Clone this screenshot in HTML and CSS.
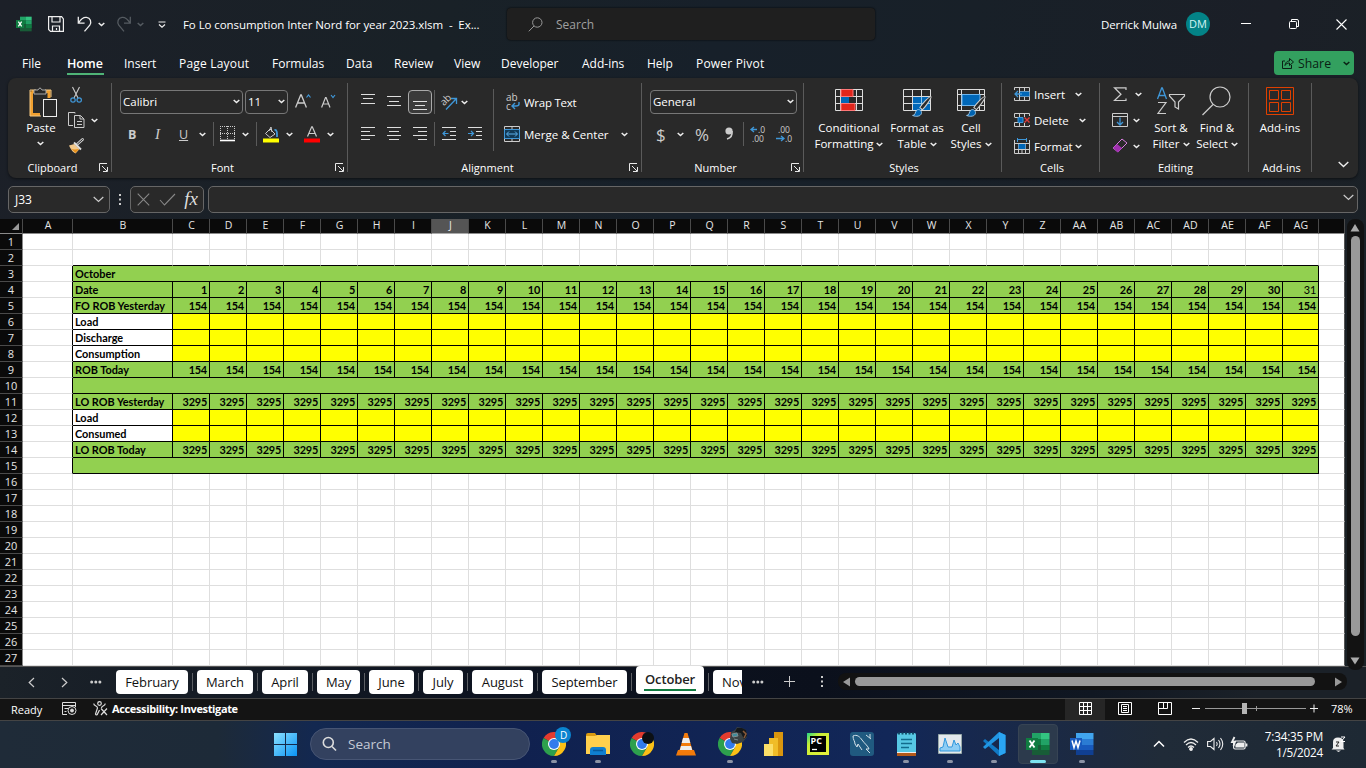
FILE: index.html
```html
<!DOCTYPE html>
<html lang="en">
<head>
<meta charset="utf-8">
<title>Fo Lo consumption Inter Nord for year 2023.xlsm - Excel</title>
<link rel="stylesheet" href="styles.css">
</head>
<body>
<svg class="defs" width="0" height="0">
  <symbol id="chev" viewBox="0 0 7 5"><path d="M.7 1 3.5 3.6 6.3 1" fill="none" stroke="currentColor" stroke-width="1.5"/></symbol>
  <symbol id="launch" viewBox="0 0 9 9"><path d="M.5 8V.5H8M3 3l5 5M8.5 4v4.500H4" fill="none" stroke="#e8e8e8"/></symbol>
  <symbol id="excel" viewBox="0 0 24 24"><path fill="#21a366" d="M6 1h9v6H6z"/><path fill="#33c481" d="M15 1h8.500v6H15z"/><path fill="#107c41" d="M6 7h9v6H6z"/><path fill="#21a366" d="M15 7h8.500v6H15z"/><path fill="#185c37" d="M6 13h17.500v10H6z"/><path fill="#107c41" d="M15 13h8.500v5H15zM0 6h12v12H0z"/><path d="M3.500 8.500 8.500 15.500M8.500 8.500 3.500 15.500" stroke="#fff" stroke-width="1.900"/></symbol>
  <symbol id="chrome" viewBox="0 0 24 24"><path fill="#e33b2e" d="M12 12 1.600 6a12 12 0 0 1 20.800 0z"/><path fill="#2da04d" d="M1.600 6A12 12 0 0 0 12 24l5-9-5-3z"/><path fill="#fbc116" d="M12 6h10.400A12 12 0 0 1 12 24l5.200-9z"/><circle cx="12" cy="12" r="6" fill="#fff"/><circle cx="12" cy="12" r="4.900" fill="#327bec"/></symbol>
  <symbol id="brush" viewBox="0 0 20 20"><path d="M18.500.7c1 .8-5 9.500-8 12.300L8 11C10 7.500 17.300-.2 18.500.7z" fill="#292929" stroke="#d0d0d0"/><path d="M1 18.500c3 0 2-3 4-5 2-1.600 5 .5 4.500 3-.7 3-5 3.500-8.500 2z" fill="#0063b1" stroke="#a9d3f2" stroke-width=".8"/></symbol>
</svg>

<header class="titlebar">
  <svg width="16" height="16"><use href="#excel"/></svg>
  <svg width="16" height="16" fill="none" stroke="#eee" stroke-width="1.200"><path d="M.6.6h13L15.400 3v12.400H2.500L.6 13.500zM4 .6V6h8V.6M4.500 15.400V10h7v5.400M8.500 12v2"/></svg>
  <svg width="16" height="16" fill="none" stroke="#eee" stroke-width="1.300"><path d="M1.300.8v6.400h6.300M1.500 7C4 3 6.500 1 9.500 1.400c4 .6 5.300 4.600 3.300 7.800L7.500 15.400"/></svg>
  <svg class="chev"><use href="#chev"/></svg>
  <svg width="16" height="16" fill="none" stroke="#555b61" stroke-width="1.300"><path d="M14.300.8v6.400H8M14 7C11.500 3 9 1 6 1.400 2 2 .8 6 2.800 9.200L8 15.400"/></svg>
  <svg class="chev dim"><use href="#chev"/></svg>
  <svg width="8" height="7" fill="none" stroke="#eee" stroke-width="1.200"><path d="M.5 1h7M1 3.500l3 2.600 3-2.600"/></svg>
  <span class="doc">Fo Lo consumption Inter Nord for year 2023.xlsm&nbsp; -&nbsp; Ex...</span>
  <div class="search"><svg width="15" height="15" fill="none" stroke="#999"><circle cx="9.300" cy="5.500" r="4.700"/><path d="M6 9 .8 14.300"/></svg><span>Search</span></div>
  <span class="user">Derrick Mulwa</span>
  <span class="avatar">DM</span>
  <svg width="10" height="10" stroke="#fff"><path d="M0 4.500h10"/></svg>
  <svg width="10" height="10" fill="none" stroke="#fff"><rect x=".5" y="2.500" width="7" height="7" rx="1"/><path d="M2.500 2.500V.500H8Q9.500.500 9.500 2v5.500h-2"/></svg>
  <svg width="11" height="11" stroke="#fff" stroke-width="1.100"><path d="m.5.5 10 10m0-10-10 10"/></svg>
</header>

<nav class="tabs">
  <span>File</span><b>Home</b><span>Insert</span><span>Page Layout</span><span>Formulas</span><span>Data</span><span>Review</span><span>View</span><span>Developer</span><span>Add-ins</span><span>Help</span><span>Power Pivot</span>
  <button class="share"><svg width="12" height="12" fill="none" stroke="#0a2014"><path d="M3 4H.5v7.500h9V8M3 8.500C3.500 5 5.500 4 7.500 4V1.500l4 3.500-4 3.500V6C5.500 6 4 6.500 3 8.500z"/></svg><span>Share</span><svg class="chev"><use href="#chev"/></svg></button>
</nav>

<section class="ribbon">
  <div class="group g-clip">
    <div class="body">
      <div class="big paste">
        <svg width="30" height="31" fill="none"><path d="M3.500 4.500H21V11M12 27.500H3.500v-23" stroke="#f0a030" stroke-width="3"/><path d="M2 3h6m9 0h6v7M2 3v26h11" stroke="#f5c983"/><path d="M6 7V3h4q2-4 4 0h4v4z" fill="#292929" stroke="#aaa"/><rect x="15.500" y="12.500" width="13" height="17" fill="#292929" stroke="#eee"/></svg>
        <span>Paste</span><svg class="chev"><use href="#chev"/></svg>
      </div>
      <div class="clipcol">
        <svg width="16" height="16" fill="none"><path d="m4.500 0 5.500 11M11.500 0 6 11" stroke="#ccc" stroke-width="1.100"/><circle cx="5" cy="13" r="2.200" stroke="#3f97d8" stroke-width="1.200"/><circle cx="11.200" cy="13" r="2.200" stroke="#3f97d8" stroke-width="1.200"/></svg>
        <div class="row"><svg width="17" height="16" fill="none" stroke="#ccc"><path d="M7 1.500V.500H.500v13H5M6.500 3.500h6l3.500 3.500v8.500H6.500zM12 3.500V7h4M9 9.500h5M9 12.500h5"/></svg><svg class="chev"><use href="#chev"/></svg></div>
        <svg width="16" height="16" fill="none"><path d="m9.500 6 5-4.500" stroke="#ccc" stroke-width="2.800" stroke-linecap="round"/><path d="m9.500 6 5-4.500" stroke="#292929" stroke-linecap="round"/><path d="M1 7.500 6.500 6l5 5-4 4.500q-4-2-6.500-8z" fill="#f3c98b"/><path d="M3 10.500q2 1.500 8 .5l-3.500 4z" fill="#e8921c"/><path d="m6 4.500 7 7" stroke="#ddd" stroke-width="1.800"/></svg>
      </div>
    </div>
    <div class="label"><span>Clipboard</span><svg width="9" height="9"><use href="#launch"/></svg></div>
  </div>

  <div class="group g-font">
    <div class="body stack">
      <div class="row r-font1">
        <div class="combo"><span>Calibri</span><svg class="chev"><use href="#chev"/></svg></div>
        <div class="combo"><span>11</span><svg class="chev"><use href="#chev"/></svg></div>
        <svg width="16" height="16" fill="none"><path d="M.6 14.500 5.700 2h.6l5.100 12.500M2.500 10h7" stroke="#ccc" stroke-width="1.300"/><path d="m11.500 4.500 2-2.500 2 2.500" stroke="#3f97d8" stroke-width="1.200"/></svg>
        <svg width="16" height="16" fill="none"><path d="M.6 14.500 4.500 4.500h.6L9 14.500M2 11h5.600" stroke="#ccc" stroke-width="1.200"/><path d="m10 2 2 2.500L14 2" stroke="#3f97d8" stroke-width="1.200"/></svg>
      </div>
      <div class="row r-font2">
        <b>B</b><i>I</i><u>U</u><svg class="chev"><use href="#chev"/></svg><hr>
        <svg width="16" height="16" stroke="#ccc"><path d="M0 .5h15M0 7.500h15M.5 0v14M7.500 0v14M14.500 0v14" stroke-dasharray="1 1"/><path d="M0 14.500h15" stroke="#fff" stroke-width="1.600"/></svg><svg class="chev"><use href="#chev"/></svg><hr>
        <svg width="16" height="17" fill="none"><path d="m7 3 5 5-5 3.500-4.500-4zM6 5l2-4 1 5" stroke="#ccc"/><path d="M11.500 4c3-.5 2.500 4 2.500 7" stroke="#3f97d8" stroke-width="1.800"/><path d="M0 12.500h16v4H0z" fill="#ff0"/></svg><svg class="chev"><use href="#chev"/></svg>
        <svg width="16" height="17" fill="none"><path d="M3.500 10.500 7.700.8h.6l4.200 9.700M5 7.500h6" stroke="#ccc" stroke-width="1.200"/><path d="M0 12.500h16v4H0z" fill="#f00"/></svg><svg class="chev"><use href="#chev"/></svg>
      </div>
    </div>
    <div class="label"><span>Font</span><svg width="9" height="9"><use href="#launch"/></svg></div>
  </div>

  <div class="group g-align">
    <div class="body">
      <div class="stack aligns">
        <div class="row r-al1">
          <svg width="24" height="24" stroke="#ddd"><path d="M5 4.500h14M7 8.500h10M5 13.500h14"/></svg>
          <svg width="24" height="24" stroke="#ddd"><path d="M5 6.500h14M7 11.500h10M5 15.500h14"/></svg>
          <svg width="24" height="24" stroke="#ddd"><rect x=".5" y=".5" width="23" height="23" rx="3.500" fill="#3a3a3a" stroke="#aaa"/><path d="M5 11.500h14M7 15.500h10M5 19.500h14"/></svg>
          <hr>
          <svg width="17" height="17" fill="none"><g class="ab"><text x="-1" y="9" transform="rotate(-45 5 6)">ab</text></g><path d="m5 15.500 10-10.500M10 4.500h5.500V10" stroke="#3f97d8" stroke-width="1.300"/></svg>
          <svg class="chev"><use href="#chev"/></svg>
        </div>
        <div class="row r-al1">
          <svg width="24" height="24" stroke="#ddd"><path d="M5 5.500h14M5 9.500h9M5 13.500h14M5 17.500h9"/></svg>
          <svg width="24" height="24" stroke="#ddd"><path d="M5 5.500h14M7 9.500h10M5 13.500h14M7 17.500h10"/></svg>
          <svg width="24" height="24" stroke="#ddd"><path d="M5 5.500h14M10 9.500h9M5 13.500h14M10 17.500h9"/></svg>
          <hr>
          <svg class="dedent" width="15" height="16" fill="none" stroke="#ddd"><path d="M0 1.500h14M8 5.500h6M8 9.500h6M0 13.500h14"/><path d="M6.500 7.500H1M3.500 5 1 7.500 3.500 10" stroke="#3f97d8" stroke-width="1.200"/></svg>
          <svg class="indent" width="15" height="16" fill="none" stroke="#ddd"><path d="M0 1.500h14M8 5.500h6M8 9.500h6M0 13.500h14"/><path d="M0 7.500h5.500M3 5l2.500 2.500L3 10" stroke="#3f97d8" stroke-width="1.200"/></svg>
        </div>
      </div>
      <div class="stack wraps">
        <div class="row"><svg width="16" height="17" fill="none"><g class="ab sm"><text x="2" y="7">ab</text><text x="2" y="16">c</text></g><path d="M15 8v2q0 2-3 2H8.500M11 9l-3 3 3 3" stroke="#3f97d8" stroke-width="1.400"/></svg><span class="tight">Wrap Text</span></div>
        <div class="row"><svg width="16" height="16" fill="none" stroke="#ccc"><path d="M.5.5h15v15H.5zM8 0v3m0 10v3"/><path d="M.5 3.500h15v9H.5z" fill="#123a56" stroke="#3f97d8"/><path d="M3 8h10M5 5.500 2.500 8 5 10.500M11 5.500 13.500 8 11 10.500" stroke="#5db2ee"/></svg><span>Merge &amp; Center</span><svg class="chev"><use href="#chev"/></svg></div>
      </div>
    </div>
    <div class="label"><span>Alignment</span><svg width="9" height="9"><use href="#launch"/></svg></div>
  </div>

  <div class="group g-num">
    <div class="body stack">
      <div class="combo general"><span>General</span><svg class="chev"><use href="#chev"/></svg></div>
      <div class="row r-num">
        <span class="sym">$</span><svg class="chev"><use href="#chev"/></svg><span class="sym pct">%</span>
        <svg width="9" height="14"><circle cx="4" cy="4" r="3.600" fill="#ccc"/><path d="M7 4c.5 4-1.500 7-5 8" stroke="#ccc" stroke-width="1.600" fill="none"/></svg><hr>
        <svg class="dec" width="16" height="17"><text x="8" y="7">.0</text><text x="2" y="16">.00</text><path d="M7 3.500H1.500M4 1 1 3.500 4 6" stroke="#3f97d8" stroke-width="1.300" fill="none"/></svg>
        <svg class="dec" width="16" height="17"><text x="2" y="7">.00</text><text x="9" y="16">.0</text><path d="M0 12.500h7M5 10l3 2.500L5 15" stroke="#3f97d8" stroke-width="1.300" fill="none"/></svg>
      </div>
    </div>
    <div class="label"><span>Number</span><svg width="9" height="9"><use href="#launch"/></svg></div>
  </div>

  <div class="group g-styles">
    <div class="body">
      <div class="big"><svg width="30" height="31" fill="none"><path d="M1.500 3.500h27v21h-27zM1 10.500h28M1 17.500h28M6.500 3v22M22.500 3v22" stroke="#ddd"/><path d="M7 3.500h12v7H7zm0 14h14v7H7z" fill="#e1251b" stroke="#f77"/><path d="M7 11h8v6H7z" fill="#0067b8"/></svg><span>Conditional<br>Formatting <svg class="chev"><use href="#chev"/></svg></span></div>
      <div class="big"><svg width="32" height="31" fill="none"><path d="M2.500 3.500h27v21h-27zM2 10.500h28M2 17.500h28M11.500 3v22M20.500 3v22" stroke="#ddd"/><path d="M12 11h17v13H12z" fill="#0067b8"/><path d="M12 17.500h17M20.500 11v13" stroke="#8cc5ee"/><use href="#brush" x="9" y="10" width="24" height="21"/></svg><span>Format as<br>Table <svg class="chev"><use href="#chev"/></svg></span></div>
      <div class="big"><svg width="32" height="31" fill="none"><path d="M2.500 3.500h27v21h-27zM2 8.500h28M2 19.500h28M6.500 3v22M24.500 3v22" stroke="#ddd"/><path d="M7 8.500h18v11H7z" fill="#0067b8" stroke="#6cb5ee"/><use href="#brush" x="9" y="10" width="24" height="21"/></svg><span>Cell<br>Styles <svg class="chev"><use href="#chev"/></svg></span></div>
    </div>
    <div class="label"><span>Styles</span></div>
  </div>

  <div class="group g-cells">
    <div class="body">
      <div class="row"><svg width="16" height="15" fill="none"><path d="M.500 3V.500h15v13H.500V11M5.500 0v14M10.500 0v14M5 4.500h10M5 9.500h10" stroke="#ccc"/><path d="M6 4.500h9.500v5H6z" fill="#0067b8"/><path d="M8 7H1M4 4 1 7l3 3" stroke="#3f97d8" stroke-width="1.300"/></svg><span>Insert</span><svg class="chev"><use href="#chev"/></svg></div>
      <div class="row"><svg width="16" height="15" fill="none"><path d="M.500 4V.500h15V3M5.500 0v4m5-4v4M.500 4.500h5M.500 9.500v4h15V12M.500 9.500h5M5.500 9v5m5-4v4" stroke="#ccc"/><path d="M4 4.500h5v5H4z" fill="#0067b8" stroke="#3f97d8"/><path d="m10.500 4.500 5 5m0-5-5 5" stroke="#e23c3c" stroke-width="1.400"/></svg><span>Delete</span><svg class="chev dl"><use href="#chev"/></svg></div>
      <div class="row"><svg width="16" height="16" fill="none"><path d="M3.500 0v4m9-4v4M3 1.500h10" stroke="#3f97d8"/><path d="M.500 2v13.500h15V2M.500 5.500h15M.500 11.500h15M4.500 5v10M11.500 5v10M8 11v4" stroke="#ccc"/><path d="M4.500 6h7v5h-7z" fill="#0067b8"/></svg><span>Format</span><svg class="chev"><use href="#chev"/></svg></div>
    </div>
    <div class="label"><span>Cells</span></div>
  </div>

  <div class="group g-edit">
    <div class="body">
      <div class="editcol">
        <div class="row"><svg width="16" height="15" fill="none" stroke="#ccc" stroke-width="1.200"><path d="M14 3V.800H2.500L9 7.200 2.500 13.500H14v-2"/></svg><svg class="chev sg"><use href="#chev"/></svg></div>
        <div class="row"><svg width="16" height="15" fill="none"><path d="M.500.500h15v13H.500zM0 3.500h16" stroke="#ccc"/><path d="M8 4.500V12M5 9l3 3 3-3" stroke="#3f97d8" stroke-width="1.300"/></svg><svg class="chev"><use href="#chev"/></svg></div>
        <div class="row"><svg width="16" height="16"><path d="m1 10 9-9 5 4-9 9z" fill="#292929" stroke="#d87fe0"/><path d="m1 10 4-4 5 4-4 4.500z" fill="#a02fb0"/></svg><svg class="chev"><use href="#chev"/></svg></div>
      </div>
      <div class="big"><svg width="30" height="31" fill="none"><path d="M1.500 13 5.700 2h.6L10.500 13M3 9.500h6" stroke="#3f97d8" stroke-width="1.300"/><path d="M2 16.500h8L2 27.500h8M13.500 8.500h15V10l-6 6v7l-3.500-2v-5l-5.500-6z" stroke="#ccc" stroke-width="1.200"/></svg><span>Sort &amp;<br>Filter <svg class="chev"><use href="#chev"/></svg></span></div>
      <div class="big"><svg width="30" height="31" fill="none" stroke="#ccc" stroke-width="1.200"><circle cx="18" cy="11" r="10"/><path d="M11 18.500.500 29"/></svg><span>Find &amp;<br>Select <svg class="chev"><use href="#chev"/></svg></span></div>
    </div>
    <div class="label"><span>Editing</span></div>
  </div>

  <div class="group g-add">
    <div class="body">
      <div class="big"><svg width="28" height="31" fill="none" stroke="#e04000"><path d="M.500 1.500h27v27H.500zM3.500 4.500h9v9h-9zm12 0h9v9h-9zm-12 12h9v9h-9zm12 0h9v9h-9z"/></svg><span>Add-ins</span></div>
    </div>
    <div class="label"><span>Add-ins</span></div>
  </div>
  <div class="collapse"><svg width="11" height="7" fill="none" stroke="#eee" stroke-width="1.400"><path d="m.7 1 4.800 4.500L10.300 1"/></svg></div>
</section>

<section class="formula">
  <div class="box namebox"><span>J33</span><svg width="11" height="7" fill="none" stroke="#ccc" stroke-width="1.200"><path d="m.7 1 4.800 4.500L10.300 1"/></svg></div>
  <svg class="dots" width="3" height="12" fill="#ccc"><path d="M0 0h2v2H0zm0 4.500h2v2H0zM0 9h2v2H0z"/></svg>
  <div class="box fx">
    <svg width="13" height="13" stroke="#888" stroke-width="1.100"><path d="m.7.700 11.500 11.600m0-11.600L.700 12.300"/></svg>
    <svg width="17" height="13" fill="none" stroke="#888" stroke-width="1.100"><path d="m1 7 4.500 5L16 1"/></svg>
    <em>fx</em>
  </div>
  <div class="box input"><svg width="11" height="7" fill="none" stroke="#ccc" stroke-width="1.200"><path d="m.7 1 4.800 4.500L10.300 1"/></svg></div>
</section>

<main class="work">
  <div class="sheet" id="sheet"></div>
  <div class="vscroll"><svg width="10" height="8"><path d="M5 0l4.500 7.500h-9z" fill="#aaa"/></svg><div class="thumb"></div><svg width="10" height="8"><path d="M5 7.500.5.500h9z" fill="#aaa"/></svg></div>
</main>

<section class="sheets">
  <svg width="7" height="11" fill="none" stroke="#ccc" stroke-width="1.200"><path d="M6 1 1.200 5.500 6 10"/></svg>
  <svg width="7" height="11" fill="none" stroke="#ccc" stroke-width="1.200"><path d="m1 1 4.800 4.500L1 10"/></svg>
  <svg width="12" height="4" fill="#ccc"><circle cx="1.700" cy="2" r="1.500"/><circle cx="5.800" cy="2" r="1.500"/><circle cx="9.900" cy="2" r="1.500"/></svg>
  <div class="names"><span>February</span><span>March</span><span>April</span><span>May</span><span>June</span><span>July</span><span>August</span><span>September</span><span class="on">October</span><span class="cut">November</span></div>
  <svg width="12" height="4" fill="#ccc"><circle cx="1.700" cy="2" r="1.500"/><circle cx="5.800" cy="2" r="1.500"/><circle cx="9.900" cy="2" r="1.500"/></svg>
  <svg width="12" height="12" stroke="#ccc"><path d="M0 5.500h11M5.500 0v11"/></svg>
  <svg class="dn" width="3" height="12" fill="#ccc"><path d="M0 0h2v2H0zm0 4.500h2v2H0zM0 9h2v2H0z"/></svg>
  <div class="hscroll"><svg width="8" height="10"><path d="M0 5 7 .500v9z" fill="#999"/></svg><div class="thumb"></div><svg width="8" height="10"><path d="M7 5 0 .500v9z" fill="#999"/></svg></div>
</section>

<footer class="status">
  <span class="ready">Ready</span>
  <svg width="15" height="13" fill="none" stroke="#ddd"><path d="M5 12.500H.500V.500h13V5M0 3.500h14M2.500 6.500h4M2.500 9.500h2"/><circle cx="10" cy="8.500" r="4"/><circle cx="10" cy="8.500" r="1.500" fill="#ddd"/></svg>
  <svg width="15" height="15" fill="none" stroke="#ddd" stroke-width="1.200"><circle cx="6.500" cy="2.500" r="1.800"/><path d="M1 2.500C0 5 4.500 4.500 4.500 7L2.500 13c.5 1.500 2 1 2 0L6.500 9M12 2.500c1 2.500-3.500 2-3.500 4.500M8 7.500l6 6.500m0-6.500L8 14"/></svg>
  <b>Accessibility: Investigate</b>
  <div class="view on"><svg width="13" height="13" fill="none" stroke="#fff"><path d="M.500.500h12v12H.500zM0 4.500h13M0 8.500h13M4.500 0v13M8.500 0v13"/></svg></div>
  <svg width="14" height="13" fill="none" stroke="#fff"><path d="M.500.500h13v12H.500zM3.500 2.500h7v8h-7zM5 4.500h4M5 6.500h4M5 8.500h4"/></svg>
  <svg width="14" height="13" fill="none" stroke="#fff"><path d="M.500.500h13v12H.500zM5.500 0v6.500M0 6.500h9.500M9.500 0v6.500"/></svg>
  <svg width="8" height="9" stroke="#eee"><path d="M0 4.500h8"/></svg>
  <svg width="101" height="13"><path d="M0 6.500h101M51.500 4v5" stroke="#999"/><path d="M37 1h5v11h-5z" fill="#b5b5b5"/></svg>
  <svg width="8" height="9" stroke="#eee"><path d="M0 4.500h8M4 .5v8"/></svg>
  <span class="zoom">78%</span>
</footer>

<footer class="taskbar">
  <svg width="24" height="24"><defs><linearGradient id="w" x2="1" y2="1"><stop stop-color="#8be0ff"/><stop offset="1" stop-color="#0a94f5"/></linearGradient></defs><path fill="url(#w)" d="M0 1h11v11H0zm12 0h11v11H12zM0 13h11v11H0zm12 0h11v11H12z"/></svg>
  <div class="find"><svg width="15" height="16" fill="none" stroke="#ddd" stroke-width="1.600"><circle cx="6.300" cy="6.500" r="5"/><path d="m10 10.500 4 4"/></svg><span>Search</span></div>
  <div class="app run"><svg class="tall" width="30" height="30"><use href="#chrome" x="0" y="5" width="24" height="24"/><circle cx="21" cy="8" r="8" fill="#0a84d0"/><text x="18" y="11.500">D</text></svg></div>
  <div class="app run"><svg width="24" height="24"><path d="M0 3q0-2 2-2h7l2 3H0z" fill="#d99a10"/><path d="M0 4h9l2-1h13v19H0z" fill="#ffd04e"/><path d="M4 23v-5q0-3 3-3h10q3 0 3 3v5z" fill="#0f7fd0"/><path d="M7 18.500h10" stroke="#075a9c" stroke-width="1.500"/></svg></div>
  <div class="app"><svg width="24" height="24"><use href="#chrome" width="24" height="24"/><circle cx="18" cy="6" r="6" fill="#0c1014"/></svg></div>
  <div class="app"><svg width="20" height="24"><path d="M2 18h16l2 5.500H0z" fill="#f27a0a"/><path d="M8.500 1h3L17 20H3z" fill="#f47c0c"/><path d="m7 6-1.300 5h8.600L13 6zM5 14l-1.200 4h12.400L15 14z" fill="#eee"/></svg></div>
  <div class="app run"><svg class="tall" width="30" height="30"><use href="#chrome" x="0" y="5" width="24" height="24"/><path d="m13 5 4-2 2-3 5 1 4 2 1 7-4 5-6 2-5-1-2-4z" fill="#3a4143"/><path d="m19 1 5 0 4 2 1 6-3 3-3-6-6-1z" fill="#15181a"/><path d="m14 7 5-1 1 3-5 1zM16 12l4 1" fill="#3f8c9c" stroke="#7d8e91"/><path d="m25 4 3 3-2 4" stroke="#8a5a3a" stroke-width="1.500" fill="none"/></svg></div>
  <div class="app"><svg width="20" height="24"><path d="M10 0h9v24h-9z" fill="#d9960e"/><path d="M5 6h9v18H5z" fill="#f0bd28"/><path d="M0 12h9v12H0z" fill="#fbdf68"/></svg></div>
  <div class="app"><svg width="22" height="22"><defs><linearGradient id="p" x2="1" y2="1"><stop stop-color="#21d789"/><stop offset=".3" stop-color="#c8ee35"/><stop offset="1" stop-color="#e8f03c"/></linearGradient></defs><path d="M0 0h22v22H0z" fill="url(#p)"/><path d="M3 3h16v16H3z" fill="#000"/><text class="pc" x="3.500" y="11">PC</text><path d="M5 16.500h5" stroke="#fff" stroke-width="1.300"/></svg></div>
  <div class="app"><svg width="24" height="24"><rect width="24" height="24" rx="3" fill="#205a80"/><path d="M3 4c4-2 7 1 9 4 3 4 6 6 7 9l-3 0 4 4M3 4c0 4 2 5 2 8l2 3 1-3 4 6M16 3l5 4m-1-5v4" fill="none" stroke="#d4e2ea"/></svg></div>
  <div class="app run"><svg width="19" height="24"><rect y="1" width="19" height="22" rx="1.500" fill="#57c8e4"/><path d="M0 21h19v3H0z" fill="#b3591a"/><path d="M0 20.500h19" stroke="#eee"/><path d="M4 7.500h11M4 11.500h11M4 15.500h8" stroke="#126b8c" stroke-width="1.600"/><path d="M1 1.500h17" stroke="#13506a" stroke-width="2" stroke-dasharray="2 1.500"/></svg></div>
  <div class="app run"><svg width="24" height="20"><path d="M.500.500h23v19H.500z" fill="#e3e8ed" stroke="#9aa"/><path d="M2 17v-3l3-1 2-9 3 9h4l2-7 2 5 2-2 2 4v4z" fill="#8dcdf5" stroke="#3197dc"/></svg></div>
  <div class="app run"><svg width="24" height="24"><path d="m17 0 6.500 3v18L17 24 1 9l2-2 14 11z" fill="#1079c4"/><path d="M17 0 1 15l2 2L17 6z" fill="#2196e3"/><path d="m17 0 6.500 3v18L17 24z" fill="#2aa5f3"/></svg></div>
  <div class="app run active"><svg width="24" height="24"><use href="#excel"/></svg></div>
  <div class="app run"><svg width="24" height="24"><path fill="#41a5ee" d="M6 1h17.500v6H6z"/><path fill="#2b7cd3" d="M6 7h17.500v6H6z"/><path fill="#185abd" d="M6 13h17.500v5H6z"/><path fill="#103f91" d="M6 18h17.500v5H6z"/><path fill="#185abd" d="M0 6h12v12H0z"/><path d="m2 8.500 2 7 2-6.500 2 6.500 2-7" stroke="#fff" stroke-width="1.500" fill="none"/></svg></div>
  <svg width="12" height="8" fill="none" stroke="#fff" stroke-width="1.500"><path d="m1 6.500 5-5 5 5"/></svg>
  <svg width="16" height="14" fill="none" stroke="#eee" stroke-width="1.200"><path d="M1 5.500Q8-1.500 15 5.500M3 8Q8 3 13 8M5 10.500Q8 7.500 11 10.500"/><circle cx="8" cy="12" r="1.300" fill="#eee"/></svg>
  <svg width="17" height="14" fill="none" stroke="#eee" stroke-width="1.100"><path d="M.600 4.500H3.500L7 1.500v11L3.500 9.500H.600zM9.500 5q1.500 2 0 4M11.500 3q3 4 0 8M13.500 1q4.500 6 0 12"/></svg>
  <svg width="17" height="14" fill="none" stroke="#eee" stroke-width="1.200"><rect x="2.600" y="4" width="11.500" height="8" rx="1.500"/><path d="M7 6h5.500v4H5V8z" fill="#eee"/><path d="M15.500 6.500v3" stroke-width="1.800"/><path d="M3.500 0 1 5h3L2.500 9" stroke-width="1.800"/></svg>
  <div class="clock">7:34:35 PM<br>1/5/2024</div>
  <svg width="15" height="16"><path d="M2 12V6q0-4.500 5-4.500 5.500 0 5.500 5V12l1 1.500H.500zM5 14.500h5l-2.500 1.500z" fill="#eee"/><path d="M5 6h3L5 10h3" stroke="#222" fill="none"/><path d="M10 1h4l-4 4.500h4" stroke="#fff" fill="none"/></svg>
</footer>
<script src="sheet.js"></script>
</body>
</html>
```
FILE: styles.css
```css
* { box-sizing: border-box; }
body { margin: 0; width: 1366px; height: 768px; overflow: hidden; display: flex; flex-direction: column; color: #fff; font-family: "Open Sans", "Noto Sans", sans-serif; font-size: 12px; background: linear-gradient(100deg, #1c2028 0%, #192127 30%, #17202a 48%, #182028 65%, #1b1f27 85%, #1a2226 100%); }
svg { display: block; flex: none; overflow: visible; }
.defs { position: absolute; }
.chev { width: 7px; height: 5px; color: #eee; }
.chev.dim { color: #555b61; }
.row { display: flex; align-items: center; }
hr { margin: 0; border: 0; width: 1px; height: 24px; background: #5a5a5a; }

.titlebar { height: 48px; padding-left: 16px; display: grid; align-items: center; grid-template-columns: 32px 29px 21px 18px 21px 21px 25px 324px 594px 85px 55px 48px 47px 11px; font-size: 11.5px; white-space: nowrap; }
.doc { letter-spacing: -.07px; }
.search { width: 368px; height: 32px; border-radius: 4px; background: #1f1f1f; box-shadow: 0 0 2px #000; display: grid; grid-template-columns: 28px 1fr; align-items: center; padding-left: 21px; color: #a0a0a0; font-size: 12px; }
.user { letter-spacing: -.1px; }
.avatar { width: 24px; height: 24px; border-radius: 50%; background: #038387; color: #d4f4f4; line-height: 24px; text-align: center; font-size: 11px; }

.tabs { height: 30px; padding: 0 0 0 22px; display: grid; grid-template-columns: 45px 57px 55px 93px 74px 48px 60px 47px 81px 65px 49px 578px 80px; line-height: 31px; font-size: 12px; white-space: nowrap; }
.tabs > span:nth-child(4), .tabs > span:nth-child(12) { letter-spacing: .2px; }
.tabs > b { width: 37px; height: 27px; font-size: 12.500px; font-weight: 600; letter-spacing: -.1px; border-bottom: 2px solid #4fb477; }
.share { display: grid; grid-template-columns: 16px 43px 8px; align-items: center; width: 80px; height: 24px; margin-top: 3px; padding: 0 0 0 8px; border: 0; border-radius: 4px; background: #33a05f; color: #0a2014; font: 12.300px "Open Sans", sans-serif; text-align: left; }
.share .chev { color: #0a2014; margin-left: 2px; }

.ribbon { height: 100px; margin: 0 8px; background: #292929; border-radius: 8px; box-shadow: 0 1px 3px #0008; display: grid; grid-template-columns: 104px 236px 294px 162px 198px 98px 149px 63px 46px; font-size: 11.5px; }
.group { display: grid; grid-template-rows: 80px 20px; background: linear-gradient(#5a5a5a, #5a5a5a) right 5px / 1px 89px no-repeat; background-position: right 0 top 5px; }
.body { display: flex; }
.stack { display: flex; flex-direction: column; gap: 8px; padding-top: 12px; }
.stack > .row, .combo { height: 24px; }
.label { display: flex; align-items: center; font-size: 11px; padding-bottom: 1px; }
.label span { flex: 1; text-align: center; padding-left: 2px; }
.label svg { margin-right: 4px; }
.label span:has(+ svg) { padding: 0 2px 0 0; }
.big { display: flex; flex-direction: column; align-items: center; padding-top: 8px; line-height: 16px; text-align: center; white-space: nowrap; }
.big > svg { margin-bottom: 3px; }
.big span .chev { display: inline-block; vertical-align: 1px; }
.paste { width: 66px; }
.big.paste > svg:first-child { margin-left: 3px; margin-top: 1px; }
.big.paste > span { margin-top: -1px; }
.paste .chev { margin: 5px 1px 0 0; }
.clipcol { padding-top: 9px; display: grid; grid-template-rows: 25px 26px 20px; align-content: start; margin-left: -6px; }
.clipcol .row { gap: 6px; align-items: start; }
.clipcol .row .chev { margin-top: 6px; }
.combo { display: flex; align-items: center; justify-content: space-between; padding: 0 2px 2px; border: 1px solid #777; border-radius: 4px; font-size: 11.5px; }
.g-font .stack { padding-left: 8px; }
.row.r-font1 { display: grid; grid-template-columns: 125px 50px 26px 16px; }
.r-font1 .combo:first-child { width: 123px; }
.r-font1 .combo:nth-child(2) { width: 43px; }
.r-font1 > svg { margin-top: -2px; }
.row.r-font2 { display: grid; grid-template-columns: 26px 25px 20px 14px 7px 22px 14px 7px 23px 18px 23px 7px; padding-left: 8px; color: #ccc; font-size: 12.500px; }
.r-font2 i { font-family: "Liberation Serif", serif; font-size: 15px; padding-left: 1px; }
.aligns { width: 146px; padding-left: 8px; }
.row.r-al1 { display: grid; grid-template-columns: 26px 26px 26px 7px 20px 8px; }
.dedent { margin-left: 1px; }
.indent { margin-left: 7px; }
.ab text { font: 10px "Open Sans", sans-serif; fill: #ccc; }
.ab.sm text { font-size: 10px; }
.wraps { padding-left: 10px; border-left: 1px solid #5a5a5a; height: 62px; margin: 11px 0 0 -1px; padding-top: 1px; font-size: 11.5px; }
.wraps .row { display: grid; grid-template-columns: 20px 97px 8px; white-space: nowrap; }
.tight { letter-spacing: -.25px; }
.g-num .stack { padding-left: 8px; }
.general { width: 147px; }
.row.r-num { display: grid; grid-template-columns: 21px 17px 31px 18px 7px 26px 16px; padding-left: 6px; }
.sym { font: 17px "Open Sans", sans-serif; color: #ccc; }
.pct { margin-left: 1px; }
.dec text { font: 8.500px "Open Sans", sans-serif; fill: #ccc; }
.g-styles .body { display: grid; grid-template-columns: 76px 60px 48px; padding-left: 7px; }
.g-cells .body { display: grid; grid-template-rows: 26px 26px 26px; padding: 3px 0 0 12px; }
.g-cells .row { display: grid; grid-template-columns: 20px 41px 8px; }
.g-cells .dl { margin-left: 4px; }
.editcol { width: 46px; padding: 3px 0 0 12px; display: grid; grid-template-rows: 26px 26px 26px; }
.editcol .row { gap: 5px; }
.editcol .sg { margin-left: 2px; }
.g-edit .big { width: 50px; }
.g-edit .big + .big { width: 42px; }
.g-add .big { width: 62px; }
.collapse { padding: 83px 0 0 26px; }

.formula { height: 41px; padding: 8px 8px 0; display: grid; grid-template-columns: 111px 11px 78px 1150px; }
.box { height: 27px; border: 1px solid #666; border-radius: 5px; background: #292929; display: flex; align-items: center; justify-content: space-between; }
.namebox { width: 102px; padding: 0 5px 0 6px; }
.dots { margin-top: 8px; }
.fx { width: 74px; padding: 0 5px 0 6px; }
.fx em { font: italic 19px "Liberation Serif", serif; color: #ddd; margin-top: -2px; }
.input { justify-content: flex-end; padding: 0 3px 4px; }

.work { height: 447px; display: flex; gap: 2px; }
.sheet { width: 1345px; display: grid; grid-template-columns: 23px 50px 100px repeat(30, 37px) 36px 26px; grid-template-rows: 15px repeat(27, 16px); background: #fff; color: #000; }
.sheet div { border-right: 1px solid #dedede; border-bottom: 1px solid #dedede; font: 700 10.9px/15px Lato, sans-serif; white-space: nowrap; overflow: hidden; }
.sheet .ch, .sheet .rh { background: #0a0a0a; color: #e6e6e6; border-color: #4a4a4a; text-align: center; font: 10.500px/13px "Open Sans", sans-serif; }
.sheet .ch { border-bottom-color: #8a8a8a; padding-left: 1px; }
.sheet .rh { line-height: 15px; border-right-color: #8a8a8a; font-size: 11px; }
.sheet .sel { background: #555; border-bottom-color: #aaa; }
.sheet .corner { display: grid; place-items: end; padding: 0 3px 3px 0; }
.sheet .last { border-right-color: #555; }
.sheet .kr { border-right-color: #000; }
.sheet .kb { border-bottom-color: #000; }
.sheet .g { background: #92d050; }
.sheet .y { background: #ff0; }
.sheet .t { padding-left: 2px; }
.sheet .n { text-align: right; padding-right: 2px; letter-spacing: -.2px; }
.sheet .reg { font-weight: 400; }
.vscroll { width: 17px; height: 451px; border-radius: 8px; background: #121212; padding: 5px 4px 5px 3px; display: flex; flex-direction: column; align-items: center; gap: 4px; position: relative; z-index: 1; }
.vscroll .thumb { width: 9px; height: 400px; border-radius: 5px; background: #999; margin-bottom: 17px; }

.sheets { height: 32px; display: grid; grid-template-columns: 33px 29px 26px 636px 32px 37px 17px 510px; padding-left: 28px; align-items: center; background: linear-gradient(90deg, #1b2229, #0d1320 35%, #0b101c 60%, #101722 80%, #1b2128 92%); border-top: 1px solid #555; }
.sheets > svg { margin-top: -1px; }
.names { height: 32px; width: 626px; overflow: hidden; display: grid; grid-template-columns: 72px 56px 46px 43px 45px 40px 61px 85px 68px 100px; gap: 9px; color: #111; font-size: 13px; padding-top: 3px; margin-top: -1px; align-self: start; letter-spacing: -.1px; }
.names span { position: relative; background: #fff; border-radius: 4px; height: 24px; text-align: center; line-height: 24px; margin-top: 1px; }
.names span::after { content: ""; position: absolute; right: -5px; top: 3px; width: 1px; height: 18px; background: #5c5f64; }
.names .on { margin-top: -3px; height: 28px; line-height: 26px; font-weight: 600; font-size: 13px; letter-spacing: -.15px; background: linear-gradient(#107c41, #107c41) 8px 23px / 52px 2px no-repeat, #fff; color: #222; }
.names .on::after { top: 7px; }
.names .cut { text-align: left; padding-left: 9px; }
.hscroll { height: 17px; width: 509px; border-radius: 8px; background: #121212; display: grid; grid-template-columns: 12px 480px 8px; align-items: center; padding-left: 5px; margin-bottom: 2px; }
.hscroll .thumb { height: 9px; width: 460px; border-radius: 5px; background: #999; }

.status { height: 23px; border-top: 1px solid #444; border-bottom: 1px solid #444; background: #141414; display: grid; grid-template-columns: 51px 31px 19px 953px 53px 40px 34px 13px 105px 21px 30px; padding: 0 0 2px 11px; align-items: center; font-size: 11px; white-space: nowrap; }
.ready { padding-top: 1px; }
.status b { font-size: 11px; letter-spacing: -.36px; }
.view { width: 40px; height: 21px; background: #262626; display: grid; place-items: center; margin-bottom: -2px; padding-bottom: 2px; }

.taskbar { height: 47px; display: grid; grid-template-columns: 36px 224px repeat(12, 44px) 91px 30px 24px 24px 32px 68px 15px; padding: 0 0 1px 274px; align-items: center; background: linear-gradient(90deg, #1f2b38 0, #1d2a38 16%, #132850 23%, #10214f 38%, #122758 65%, #1a2946 76%, #202b38 85%, #1e2934); }
.find { width: 220px; height: 32px; border: 1px solid #475574; border-radius: 16px; background: #33415f; display: grid; grid-template-columns: 26px 1fr; padding-left: 11px; align-items: center; font-size: 13.500px; color: #c5cad5; }
.app { width: 40px; height: 40px; border-radius: 4px; display: grid; place-items: center; position: relative; }
.app .tall { margin: -5px 0 0 6px; }
.app text { font: 10px "Open Sans", sans-serif; fill: #fff; }
.app text.pc { font: bold 9px "Open Sans", sans-serif; }
.run::after { content: ""; position: absolute; left: 17px; bottom: 1px; width: 6px; height: 3px; border-radius: 2px; background: #8b93a5; }
.active { background: #2c3a4c; border: 1px solid #374454; }
.active::after { left: 11px; bottom: 0; width: 16px; background: #7de3f0; }
.clock { font-size: 11.700px; line-height: 16px; text-align: right; width: 60px; letter-spacing: -.2px; white-space: nowrap; }
```
FILE: sheet.js
```js
const sheet = document.getElementById("sheet");
const days = 31;

function letters(n) {
  return n < 26 ? String.fromCharCode(65 + n) : "A" + String.fromCharCode(39 + n);
}

function cell(classes, text = "", span = 1) {
  const div = document.createElement("div");
  div.className = classes;
  div.textContent = text;
  if (span > 1) div.style.gridColumn = "span " + span;
  sheet.append(div);
  return div;
}

const rows = {
  3: ["October"], 10: [""], 15: [""],
  4: ["Date", d => d], 5: ["FO ROB Yesterday", () => 154],
  6: ["Load"], 7: ["Discharge"], 8: ["Consumption"],
  9: ["ROB Today", () => 154], 11: ["LO ROB Yesterday", () => 3295],
  12: ["Load"], 13: ["Consumed"], 14: ["LO ROB Today", () => 3295]
};
const merged = [3, 10, 15];

cell("ch corner").innerHTML = '<svg width="7" height="7"><path d="M7 0v7H0z" fill="#999"/></svg>';
for (let c = 0; c < 33; c++) cell("ch" + (c === 9 ? " sel" : ""), letters(c));
cell("ch");

for (let r = 1; r <= 27; r++) {
  cell("rh", r);
  const row = rows[r];
  cell(row ? "kr" : "");
  if (!row) {
    for (let c = 0; c < days + 1; c++) cell(r === 2 ? "kb" : "");
  } else if (merged.includes(r)) {
    cell("g t kr kb", row[0], days + 1);
  } else {
    cell("t kr kb" + (row[1] ? " g" : ""), row[0]);
    for (let d = 1; d <= days; d++) {
      const regular = r === 4 && d === days ? " reg" : "";
      cell("n kr kb " + (row[1] ? "g" : "y") + regular, row[1] ? row[1](d) : "");
    }
  }
  cell("last");
}
```
